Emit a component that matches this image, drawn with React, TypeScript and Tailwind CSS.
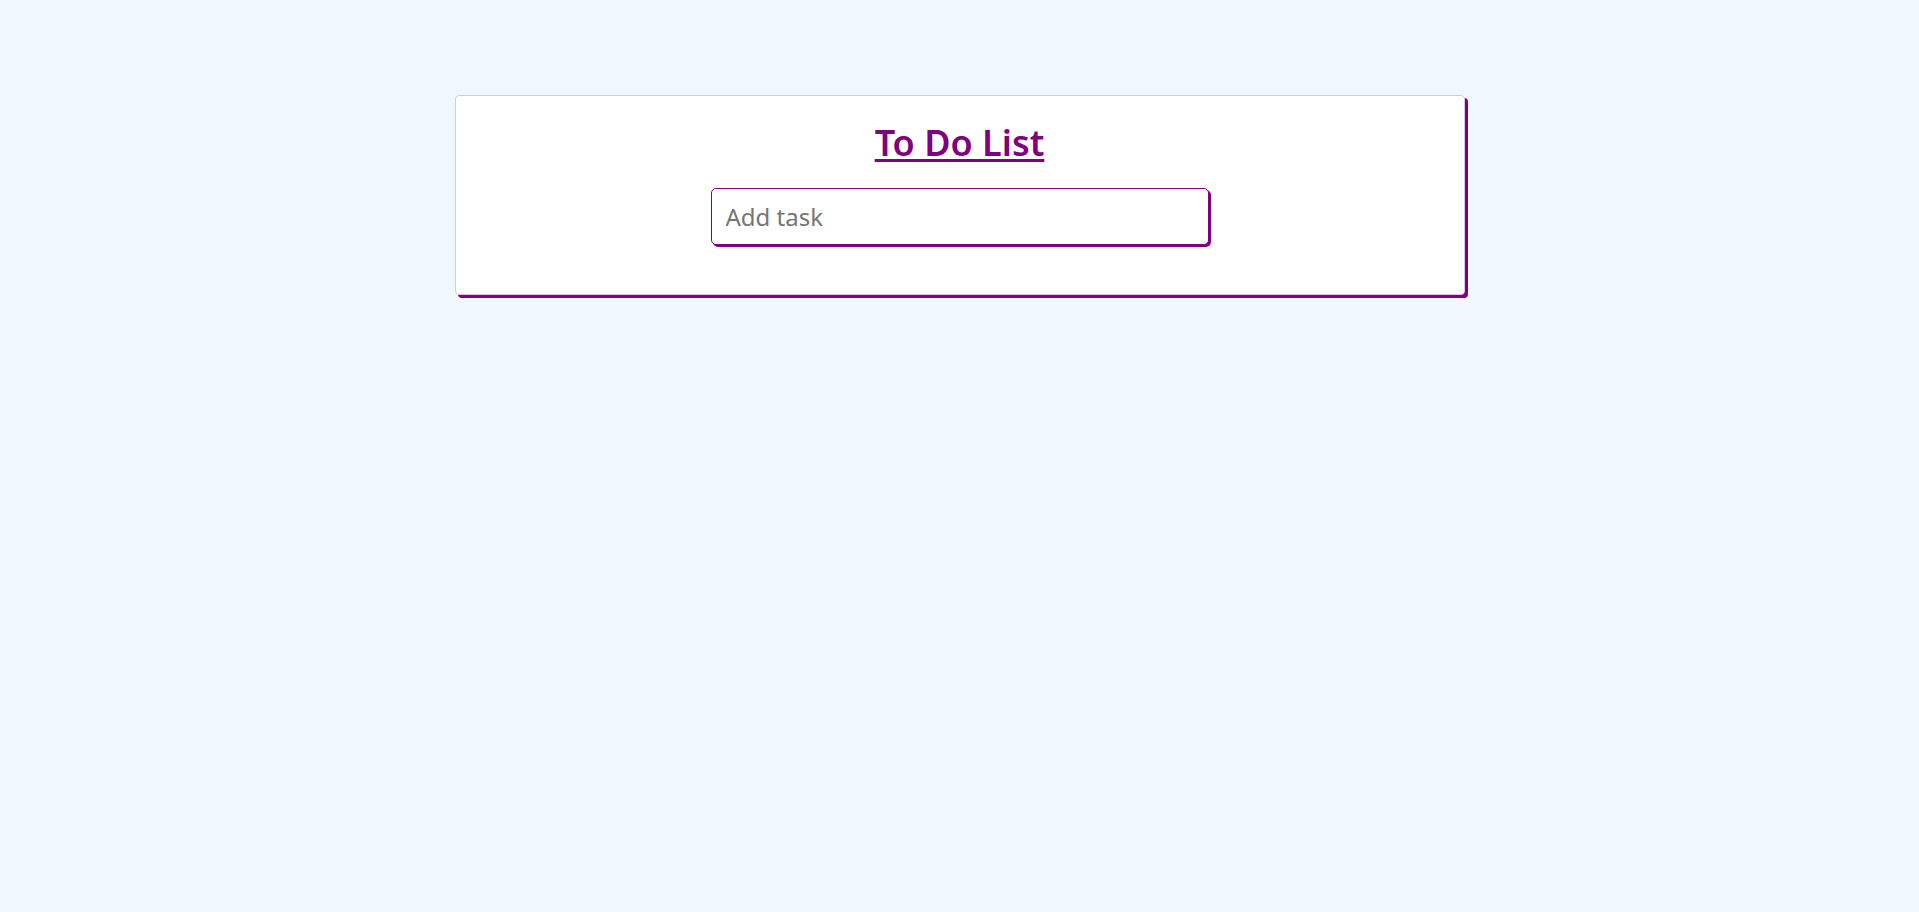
export default function App() {
  return (
    <div
      className="min-h-screen w-full bg-[#f0f8ff] pt-[95px]"
      style={{ fontFamily: '"Noto Sans", "Open Sans", sans-serif' }}
    >
      <div className="mx-auto w-[1010px] rounded-[4px] border border-[#dcc6e6] bg-white pb-[49px] pt-[22px] shadow-[3px_3px_0_#800080]">
        <h1 className="text-center text-[36px] font-semibold leading-[50px] text-[#800080] underline decoration-[3px] underline-offset-[3px]">
          To Do List
        </h1>
        <div className="mt-[20px] flex justify-center">
          <input
            type="text"
            placeholder="Add task"
            className="h-[57px] w-[498px] rounded-[5px] border border-[#800080] bg-white px-[14px] text-[24px] text-gray-800 shadow-[2px_2px_0_#800080] outline-none placeholder:text-[#757575]"
          />
        </div>
      </div>
    </div>
  );
}
